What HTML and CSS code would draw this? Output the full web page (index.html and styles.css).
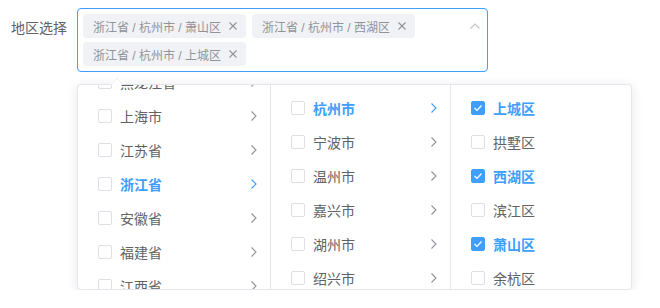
FILE: index.html
```html
<!DOCTYPE html>
<html>
<head>
    <title>地区选择</title>
    <link rel="stylesheet" href="styles.css">
</head>
<body>
    <div class="form-item">
        <label class="form-label">地区选择</label>
        <div class="cascader">
            <!-- Input with selected tags -->
            <div class="cascader-input">
                <div class="tags">
                    <span class="tag">浙江省 / 杭州市 / 萧山区<span class="tag-close"><svg width="8" height="8" viewBox="0 0 8 8"><path d="M0.5 0.5L7.5 7.5M7.5 0.5L0.5 7.5" stroke="#909399" stroke-width="1.1" fill="none"/></svg></span></span>
                    <span class="tag">浙江省 / 杭州市 / 西湖区<span class="tag-close"><svg width="8" height="8" viewBox="0 0 8 8"><path d="M0.5 0.5L7.5 7.5M7.5 0.5L0.5 7.5" stroke="#909399" stroke-width="1.1" fill="none"/></svg></span></span>
                    <span class="tag">浙江省 / 杭州市 / 上城区<span class="tag-close"><svg width="8" height="8" viewBox="0 0 8 8"><path d="M0.5 0.5L7.5 7.5M7.5 0.5L0.5 7.5" stroke="#909399" stroke-width="1.1" fill="none"/></svg></span></span>
                </div>
                <svg class="suffix-arrow" width="10" height="6" viewBox="0 0 10 6"><path d="M0.5 5.5L5 1L9.5 5.5" stroke="#c0c4cc" stroke-width="1.1" fill="none"/></svg>
            </div>

            <!-- Dropdown panel -->
            <div class="cascader-panel">
                <span class="popper-arrow"></span>
                <div class="menu menu-wide">
                    <ul class="menu-list scrolled">
                        <li class="menu-item"><span class="checkbox"></span><span class="item-label">黑龙江省</span><svg class="chevron" width="6" height="10" viewBox="0 0 6 10"><path d="M0.5 0.5L5 5L0.5 9.5" stroke="#909399" stroke-width="1.1" fill="none"/></svg></li>
                        <li class="menu-item"><span class="checkbox"></span><span class="item-label">上海市</span><svg class="chevron" width="6" height="10" viewBox="0 0 6 10"><path d="M0.5 0.5L5 5L0.5 9.5" stroke="#909399" stroke-width="1.1" fill="none"/></svg></li>
                        <li class="menu-item"><span class="checkbox"></span><span class="item-label">江苏省</span><svg class="chevron" width="6" height="10" viewBox="0 0 6 10"><path d="M0.5 0.5L5 5L0.5 9.5" stroke="#909399" stroke-width="1.1" fill="none"/></svg></li>
                        <li class="menu-item active"><span class="checkbox"></span><span class="item-label">浙江省</span><svg class="chevron" width="6" height="10" viewBox="0 0 6 10"><path d="M0.5 0.5L5 5L0.5 9.5" stroke="#409eff" stroke-width="1.1" fill="none"/></svg></li>
                        <li class="menu-item"><span class="checkbox"></span><span class="item-label">安徽省</span><svg class="chevron" width="6" height="10" viewBox="0 0 6 10"><path d="M0.5 0.5L5 5L0.5 9.5" stroke="#909399" stroke-width="1.1" fill="none"/></svg></li>
                        <li class="menu-item"><span class="checkbox"></span><span class="item-label">福建省</span><svg class="chevron" width="6" height="10" viewBox="0 0 6 10"><path d="M0.5 0.5L5 5L0.5 9.5" stroke="#909399" stroke-width="1.1" fill="none"/></svg></li>
                        <li class="menu-item"><span class="checkbox"></span><span class="item-label">江西省</span><svg class="chevron" width="6" height="10" viewBox="0 0 6 10"><path d="M0.5 0.5L5 5L0.5 9.5" stroke="#909399" stroke-width="1.1" fill="none"/></svg></li>
                    </ul>
                </div>
                <div class="menu">
                    <ul class="menu-list">
                        <li class="menu-item active"><span class="checkbox"></span><span class="item-label">杭州市</span><svg class="chevron" width="6" height="10" viewBox="0 0 6 10"><path d="M0.5 0.5L5 5L0.5 9.5" stroke="#409eff" stroke-width="1.1" fill="none"/></svg></li>
                        <li class="menu-item"><span class="checkbox"></span><span class="item-label">宁波市</span><svg class="chevron" width="6" height="10" viewBox="0 0 6 10"><path d="M0.5 0.5L5 5L0.5 9.5" stroke="#909399" stroke-width="1.1" fill="none"/></svg></li>
                        <li class="menu-item"><span class="checkbox"></span><span class="item-label">温州市</span><svg class="chevron" width="6" height="10" viewBox="0 0 6 10"><path d="M0.5 0.5L5 5L0.5 9.5" stroke="#909399" stroke-width="1.1" fill="none"/></svg></li>
                        <li class="menu-item"><span class="checkbox"></span><span class="item-label">嘉兴市</span><svg class="chevron" width="6" height="10" viewBox="0 0 6 10"><path d="M0.5 0.5L5 5L0.5 9.5" stroke="#909399" stroke-width="1.1" fill="none"/></svg></li>
                        <li class="menu-item"><span class="checkbox"></span><span class="item-label">湖州市</span><svg class="chevron" width="6" height="10" viewBox="0 0 6 10"><path d="M0.5 0.5L5 5L0.5 9.5" stroke="#909399" stroke-width="1.1" fill="none"/></svg></li>
                        <li class="menu-item"><span class="checkbox"></span><span class="item-label">绍兴市</span><svg class="chevron" width="6" height="10" viewBox="0 0 6 10"><path d="M0.5 0.5L5 5L0.5 9.5" stroke="#909399" stroke-width="1.1" fill="none"/></svg></li>
                    </ul>
                </div>
                <div class="menu menu-last">
                    <ul class="menu-list">
                        <li class="menu-item active"><span class="checkbox checked"><svg width="10" height="8" viewBox="0 0 10 8"><path d="M1.5 4L4 6.5L8.5 1.5" stroke="#fff" stroke-width="1.2" fill="none"/></svg></span><span class="item-label">上城区</span></li>
                        <li class="menu-item"><span class="checkbox"></span><span class="item-label">拱墅区</span></li>
                        <li class="menu-item active"><span class="checkbox checked"><svg width="10" height="8" viewBox="0 0 10 8"><path d="M1.5 4L4 6.5L8.5 1.5" stroke="#fff" stroke-width="1.2" fill="none"/></svg></span><span class="item-label">西湖区</span></li>
                        <li class="menu-item"><span class="checkbox"></span><span class="item-label">滨江区</span></li>
                        <li class="menu-item active"><span class="checkbox checked"><svg width="10" height="8" viewBox="0 0 10 8"><path d="M1.5 4L4 6.5L8.5 1.5" stroke="#fff" stroke-width="1.2" fill="none"/></svg></span><span class="item-label">萧山区</span></li>
                        <li class="menu-item"><span class="checkbox"></span><span class="item-label">余杭区</span></li>
                    </ul>
                </div>
            </div>
        </div>
    </div>
</body>
</html>
```

FILE: styles.css
```css
/* Reset default margin and padding */
* {
    margin: 0;
    padding: 0;
    box-sizing: border-box;
}

body {
    background-color: #fff;
    font-family: "Liberation Sans", "Noto Sans CJK SC", sans-serif;
    color: #606266;
}

/* Form row */
.form-item {
    display: flex;
    align-items: flex-start;
    padding: 8px 0 0 11px;
}

.form-label {
    width: 56px;
    margin-right: 10px;
    font-size: 14px;
    line-height: 40px;
    color: #606266;
}

/* Cascader input */
.cascader {
    display: flex;
    flex-direction: column;
}

.cascader-input {
    width: 411px;
    height: 64px;
    border: 1px solid #409eff;
    border-radius: 4px;
    display: flex;
    align-items: flex-start;
    padding: 5px 7px 0 5px;
}

.tags {
    flex: 1;
    display: flex;
    flex-wrap: wrap;
    gap: 4px 6px;
}

.tag {
    display: inline-flex;
    align-items: center;
    height: 24px;
    padding: 0 5px 0 10px;
    background-color: #f0f2f5;
    border-radius: 4px;
    font-size: 12px;
    color: #909399;
    white-space: nowrap;
}

.tag-close {
    width: 16px;
    height: 16px;
    margin-left: 4px;
    display: flex;
    align-items: center;
    justify-content: center;
}

.suffix-arrow {
    margin-top: 9px;
}

/* Dropdown panel */
.cascader-panel {
    position: relative;
    display: flex;
    margin-top: 12px;
    height: 206px;
    width: 555px;
    border: 1px solid #e4e7ed;
    border-radius: 4px;
    background-color: #fff;
    box-shadow: 0 2px 12px 0 rgba(0, 0, 0, 0.1);
}

.popper-arrow {
    position: absolute;
    top: -7px;
    left: 33px;
    width: 12px;
    height: 12px;
    background-color: #fff;
    border-left: 1px solid #ebeef5;
    border-top: 1px solid #ebeef5;
    transform: rotate(45deg) scale(0.7, 0.7);
    z-index: 2;
}

.menu {
    width: 180px;
    height: 204px;
    overflow: hidden;
    border-right: 1px solid #e4e7ed;
}

.menu-wide {
    width: 193px;
}

.menu-last {
    border-right: none;
}

.menu-list {
    list-style: none;
    padding: 6px 0;
}

.menu-list.scrolled {
    margin-top: -26px;
}

.menu-item {
    display: flex;
    align-items: center;
    height: 34px;
    padding: 0 13px 0 20px;
    font-size: 14px;
    color: #606266;
}

.menu-item.active {
    color: #409eff;
    font-weight: bold;
}

.item-label {
    flex: 1;
}

.checkbox {
    width: 14px;
    height: 14px;
    margin-right: 8px;
    border: 1px solid #dcdfe6;
    border-radius: 2px;
    background-color: #fff;
    display: flex;
    align-items: center;
    justify-content: center;
}

.checkbox.checked {
    background-color: #409eff;
    border-color: #409eff;
}
```
